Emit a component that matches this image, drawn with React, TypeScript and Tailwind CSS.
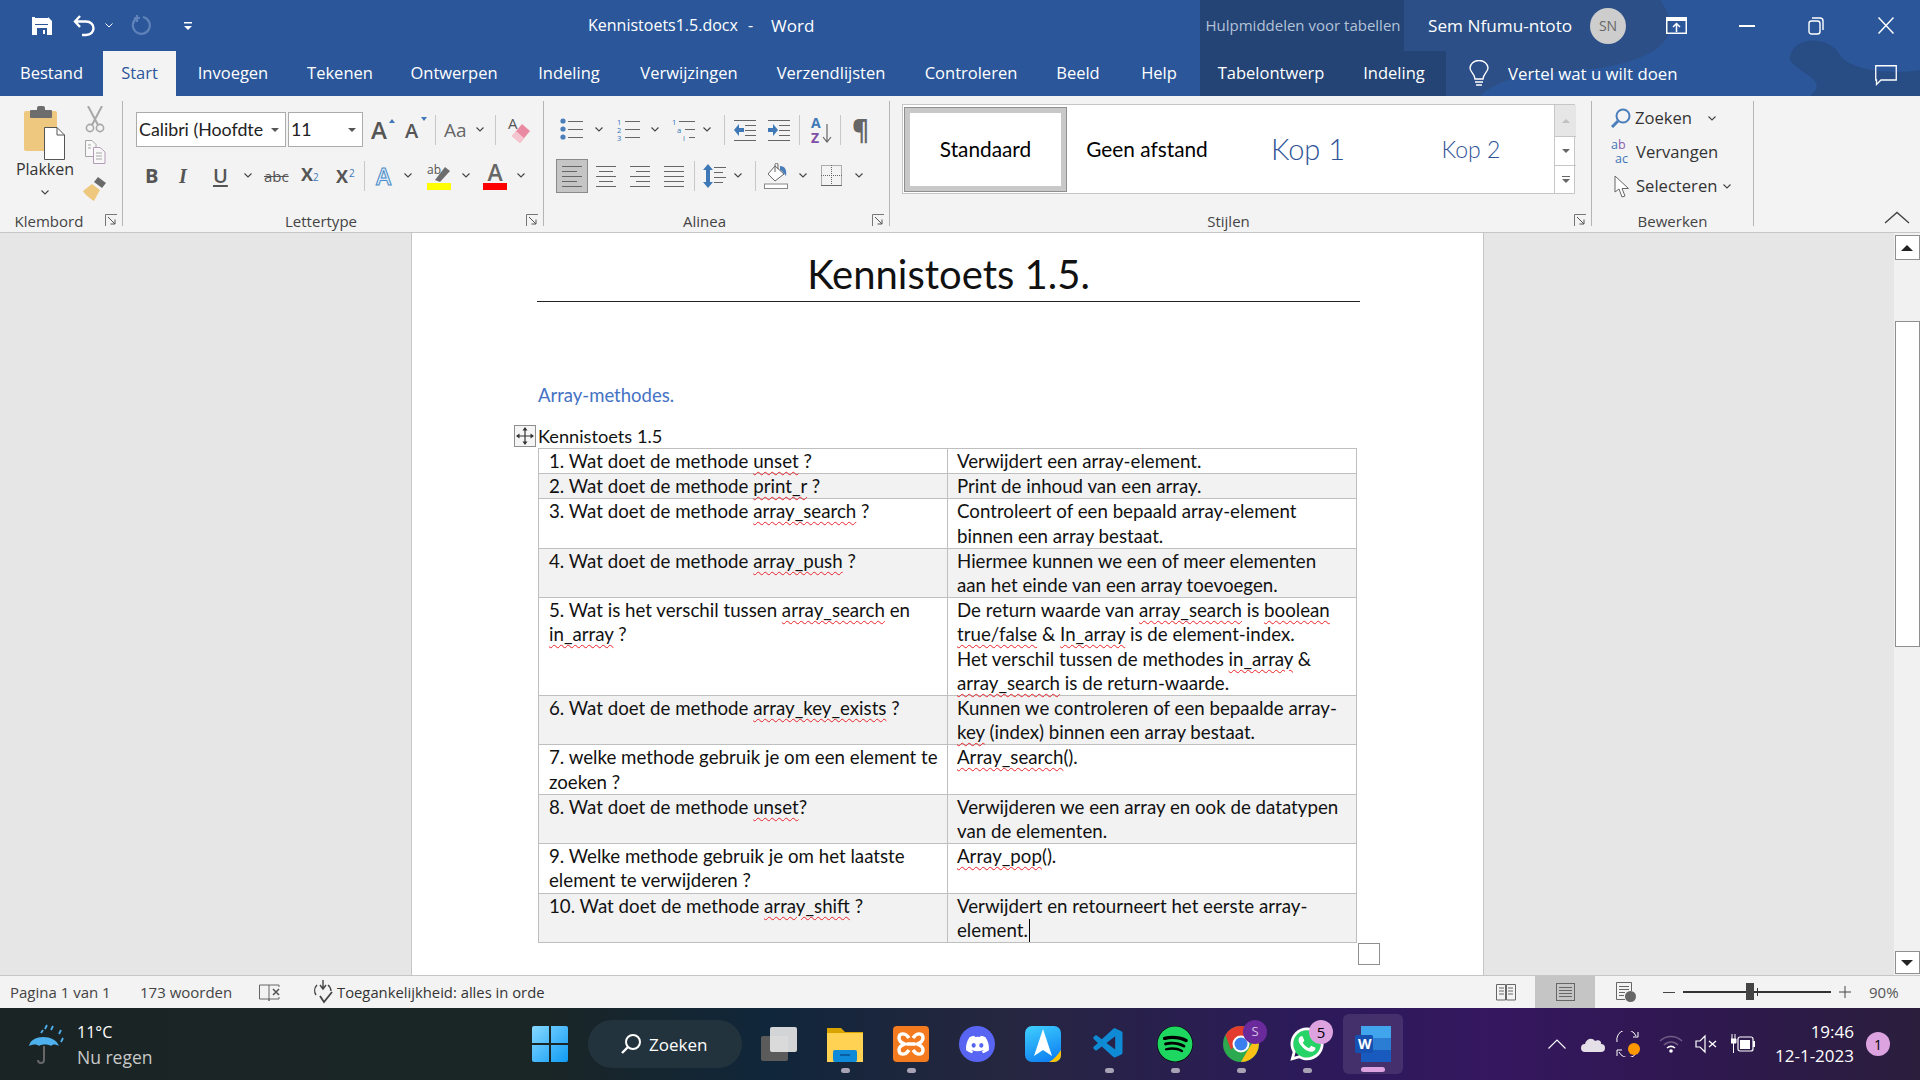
// App.tsx - Word window with the Kennistoets document
import React from "react";
import { FaDiscord, FaSpotify, FaWhatsapp } from "react-icons/fa";
import { VscVscode } from "react-icons/vsc";

const Chev = ({ className = "" }: { className?: string }) => (
  <svg width="8" height="5" viewBox="0 0 8 5" className={`shrink-0 ${className}`}>
    <path d="M0.5 0.5 L4 4 L7.5 0.5" fill="none" stroke="#444" strokeWidth="1.1" />
  </svg>
);

const Sep = ({ className = "" }: { className?: string }) => (
  <div className={`w-px h-[30px] bg-[#c8c8c8] shrink-0 ${className}`} />
);

const Launcher = () => (
  <svg width="13" height="13" viewBox="0 0 13 13" className="absolute right-[4px] bottom-[-1px]">
    <path d="M0.5 12 V0.5 H12" fill="none" stroke="#777" />
    <path d="M3 3 L10 10 M10 5.5 V10 H5.5" fill="none" stroke="#555" />
  </svg>
);

const Group = ({ className, label, launcher = true, children }: { className: string; label: string; launcher?: boolean; children: React.ReactNode }) => (
  <div className={`relative flex flex-col h-[125px] mt-[5px] shrink-0 border-r border-[#b5b5b5] ${className}`}>
    <div className="flex-1 min-h-0">{children}</div>
    <div className={`text-center text-[15px] leading-[20px] text-[#444] mb-[-5px] ${launcher ? "pr-[24px]" : ""}`}>{label}</div>
    {launcher && <Launcher />}
  </div>
);

// horizontal line block used by the alignment and list icons
const Lines = ({ w, ys, xs, x2s, color = "#666" }: { w: number; ys: number[]; xs?: number[]; x2s?: number[]; color?: string }) => (
  <svg width={w} height="24" viewBox={`0 0 ${w} 24`} className="shrink-0">
    {ys.map((y, i) => (
      <line key={i} x1={xs ? xs[i] : 0} x2={x2s ? x2s[i] : w} y1={y + 0.5} y2={y + 0.5} stroke={color} strokeWidth="1" />
    ))}
  </svg>
);

const Bullets = ({ kind }: { kind: "dot" | "num" | "multi" }) => (
  <svg width="23" height="24" viewBox="0 0 23 24" className="shrink-0 overflow-visible">
    {kind === "dot" && [3, 11, 19].map((y) => <circle key={y} cx="3" cy={y} r="2.6" fill="#4a7ebb" />)}
    {kind === "num" && ["1", "2", "3"].map((t, i) => <text key={t} x="0" y={7 + i * 8} fontSize="7.5" fill="#2f74b5" fontFamily="Open Sans">{t}</text>)}
    {kind === "multi" && (
      <>
        <text x="0" y="7" fontSize="7.5" fill="#2f74b5" fontFamily="Open Sans">1</text>
        <text x="5" y="15" fontSize="7.5" fill="#2f74b5" fontFamily="Open Sans">a</text>
        <text x="11" y="23" fontSize="7.5" fill="#2f74b5" fontFamily="Open Sans">i</text>
      </>
    )}
    {kind === "multi" ? (
      <>
        <line x1="7" x2="23" y1="3.5" y2="3.5" stroke="#666" />
        <line x1="13" x2="23" y1="11.5" y2="11.5" stroke="#666" />
        <line x1="17" x2="23" y1="19.5" y2="19.5" stroke="#666" />
      </>
    ) : (
      [3, 11, 19].map((y) => <line key={y} x1="8" x2="23" y1={y + 0.5} y2={y + 0.5} stroke="#666" />)
    )}
  </svg>
);

const Indent = ({ flip }: { flip?: boolean }) => (
  <svg width="22" height="22" viewBox="0 0 22 22" className="shrink-0">
    {[1, 21].map((y) => <line key={y} x1="0" x2="22" y1={y + 0.5} y2={y + 0.5} stroke="#666" />)}
    {[6, 11, 16].map((y) => <line key={y} x1="11" x2="22" y1={y + 0.5} y2={y + 0.5} stroke="#666" />)}
    {flip ? <path d="M0 9 H5 V5 L10 11 L5 17 V13 H0 Z" fill="#3f78b7" /> : <path d="M10 9 H5 V5 L0 11 L5 17 V13 H10 Z" fill="#3f78b7" />}
  </svg>
);

const ToolIcons = {
  Paste: () => (
    <svg width="42" height="54" viewBox="0 0 42 54">
      <rect x="0" y="5" width="33" height="40" rx="2" fill="#edc87e" />
      <rect x="6" y="4" width="22" height="8" rx="1" fill="#6d6d6d" />
      <rect x="13" y="0" width="8" height="6" rx="2" fill="#6d6d6d" />
      <path d="M20.5 21.5 H33 L40.5 29 V53.5 H20.5 Z" fill="#fff" stroke="#555" />
      <path d="M33 21.5 V29 H40.5" fill="none" stroke="#555" />
    </svg>
  ),
  Cut: () => (
    <svg width="20" height="27" viewBox="0 0 20 27">
      <path d="M3 0 L13 19 M17 0 L7 19" stroke="#a8a8a8" strokeWidth="2" fill="none" />
      <circle cx="5" cy="22" r="3.6" fill="none" stroke="#a8a8a8" strokeWidth="1.6" />
      <circle cx="15" cy="22" r="3.6" fill="none" stroke="#a8a8a8" strokeWidth="1.6" />
    </svg>
  ),
  Copy: () => (
    <svg width="21" height="24" viewBox="0 0 21 24">
      <path d="M0.5 0.5 H7 L11 4.5 V16.5 H0.5 Z" fill="#f8f8f8" stroke="#a5a5a5" />
      <path d="M8.5 7.5 H15 L20 12 V23.5 H8.5 Z" fill="#f8f8f8" stroke="#b39cb8" />
      <path d="M11 13 H17 M11 16 H17 M11 19 H17 M3 5 H6 M3 8 H6" stroke="#a5a5a5" />
    </svg>
  ),
  Painter: () => (
    <svg width="24" height="25" viewBox="0 0 24 25">
      <path d="M15 0 L23 6 L19 11 L11 5 Z" fill="#6a6a6a" />
      <path d="M9 7 L17 13 L11 24 C8 22 2 18 0 14 Z" fill="#edc87e" />
    </svg>
  ),
  Eraser: () => (
    <svg width="22" height="29" viewBox="0 0 22 29" className="overflow-visible">
      <text x="0" y="14" fontSize="15" fill="#555" fontFamily="Open Sans">A</text>
      <path d="M14 9 L22 16 L12 28 L4 21 Z" fill="#e98aa0" />
      <path d="M4 21 L8 16 L16 23 L12 28 Z" fill="#f5c6d0" />
    </svg>
  ),
  Sort: () => (
    <svg width="21" height="28" viewBox="0 0 21 28" className="overflow-visible">
      <text x="0" y="12" fontSize="14" fontWeight="700" fill="#3f78b7" fontFamily="Open Sans">A</text>
      <text x="0" y="27" fontSize="14" fontWeight="700" fill="#7e4fa5" fontFamily="Open Sans">Z</text>
      <path d="M16 8 V26 M12 21 L16 26 L20 21" fill="none" stroke="#666" strokeWidth="1.2" />
    </svg>
  ),
  Spacing: () => (
    <svg width="23" height="24" viewBox="0 0 23 24">
      <path d="M5 0 L10 6 H7 V18 H10 L5 24 L0 18 H3 V6 H0 Z" fill="#3f78b7" />
      {[3, 8, 13, 18].map((y, i) => <line key={y} x1="11" x2={i % 2 ? 20 : 23} y1={y + 0.5} y2={y + 0.5} stroke="#666" />)}
    </svg>
  ),
  Shading: () => (
    <svg width="24" height="26" viewBox="0 0 24 26">
      <path d="M11 3 L20 11 L11 18 L4 11 Z" fill="#fff" stroke="#666" />
      <path d="M11 9 V1.5 A1.5 1.5 0 0 1 14 2 V6" fill="none" stroke="#666" />
      <path d="M16 3 C21 3 23 7 22 13 C20 11 19 8 16 7 Z" fill="#4a7ebb" />
      <rect x="0.5" y="21" width="23" height="4.5" fill="#fff" stroke="#888" />
    </svg>
  ),
  Borders: () => (
    <svg width="21" height="21" viewBox="0 0 21 21">
      <rect x="0.5" y="0.5" width="20" height="20" fill="none" stroke="#666" strokeDasharray="1 1" />
      <path d="M10.5 0 V21 M0 10.5 H21" stroke="#666" strokeDasharray="1 1" />
      <line x1="0" x2="21" y1="20.5" y2="20.5" stroke="#666" />
    </svg>
  ),
  Search: () => (
    <svg width="20" height="20" viewBox="0 0 20 20">
      <circle cx="12" cy="8" r="6.5" fill="none" stroke="#4a7ebb" strokeWidth="2" />
      <path d="M7 13 L1 19" stroke="#4a7ebb" strokeWidth="3" />
    </svg>
  ),
  Cursor: () => (
    <svg width="16" height="23" viewBox="0 0 16 23">
      <path d="M1 1 V17 L5 14 L8 22 L11 21 L8 13.5 L14.5 13.5 Z" fill="#fff" stroke="#666" />
    </svg>
  ),
};

const Spell = ({ text }: { text: string }) => (
  <>
    {text.split(/(\{[^}]*\})/).map((part, i) =>
      part.startsWith("{") ? (
        <span key={i} className="underline decoration-wavy decoration-[#e8222a] decoration-1 underline-offset-[3px]">
          {part.slice(1, -1)}
        </span>
      ) : (
        <span key={i}>{part}</span>
      )
    )}
  </>
);

const rows: { q: string[]; a: string[] }[] = [
  { q: ["1. Wat doet de methode {unset} ?"], a: ["Verwijdert een array-element."] },
  { q: ["2. Wat doet de methode {print_r} ?"], a: ["Print de inhoud van een array."] },
  { q: ["3. Wat doet de methode {array_search} ?"], a: ["Controleert of een bepaald array-element", "binnen een array bestaat."] },
  { q: ["4. Wat doet de methode {array_push} ?"], a: ["Hiermee kunnen we een of meer elementen", "aan het einde van een array toevoegen."] },
  {
    q: ["5. Wat is het verschil tussen {array_search} en", "{in_array} ?"],
    a: ["De return waarde van {array_search} is {boolean}", "{true/false} & {In_array} is de element-index.", "Het verschil tussen de methodes {in_array} &", "{array_search} is de return-waarde."],
  },
  { q: ["6. Wat doet de methode {array_key_exists} ?"], a: ["Kunnen we controleren of een bepaalde array-", "{key} (index) binnen een array bestaat."] },
  { q: ["7. welke methode gebruik je om een element te", "zoeken ?"], a: ["{Array_search}()."] },
  { q: ["8. Wat doet de methode {unset}?"], a: ["Verwijderen we een array en ook de datatypen", "van de elementen."] },
  { q: ["9. Welke methode gebruik je om het laatste", "element te verwijderen ?"], a: ["{Array_pop}()."] },
  { q: ["10. Wat doet de methode {array_shift} ?"], a: ["Verwijdert en retourneert het eerste array-", "element."] },
];

const tabs = [
  { label: "Bestand", w: "w-[103px]" },
  { label: "Start", w: "w-[73px]", active: true },
  { label: "Invoegen", w: "w-[114px]" },
  { label: "Tekenen", w: "w-[100px]" },
  { label: "Ontwerpen", w: "w-[128px]" },
  { label: "Indeling", w: "w-[102px]" },
  { label: "Verwijzingen", w: "w-[138px]" },
  { label: "Verzendlijsten", w: "w-[146px]" },
  { label: "Controleren", w: "w-[134px]" },
  { label: "Beeld", w: "w-[80px]" },
  { label: "Help", w: "w-[82px]" },
];

const dockClass = "w-[66px] h-full flex flex-col items-center relative";

const Dot = () => <div className="absolute bottom-[7px] w-[9px] h-[5px] rounded-full bg-[#a8a3b4]" />;

const Header = () => (
  <div className="relative h-[96px] bg-[#2b579a] shrink-0 text-white overflow-hidden">
    {/* background art top right */}
    <svg className="absolute right-0 top-0" width="560" height="96" viewBox="0 0 560 96">
      <path d="M0 0 H300 C330 40 290 60 240 68 C190 74 150 70 120 96 H60 C40 60 20 30 0 0 Z" fill="#2c4f87" />
      <path d="M430 60 C430 35 470 35 480 55 C490 70 530 75 560 70 V96 H450 C470 80 440 75 430 60 Z" fill="#284d85" />
    </svg>
    {/* title row */}
    <div className="relative flex items-center h-[51px]">
      <div className="w-[588px] flex items-center shrink-0">
        <svg width="20" height="20" viewBox="0 0 20 20" className="ml-[32px]">
          <path d="M0 1 H16 L20 5 V19 H0 Z" fill="#fff" />
          <rect x="3" y="1" width="13" height="8" fill="#2b579a" />
          <rect x="3" y="2" width="13" height="6" fill="#fff" />
          <rect x="5" y="12" width="10" height="7" fill="#2b579a" />
          <rect x="11" y="14" width="2" height="4" fill="#fff" />
        </svg>
        <svg width="22" height="24" viewBox="0 0 22 24" className="ml-[21px]">
          <path d="M7 2 L2 7.5 L7 13 M2 7.5 H13 C23 7.5 23 21 13 21 H9" fill="none" stroke="#fff" strokeWidth="2.4" />
        </svg>
        <svg width="8" height="5" viewBox="0 0 8 5" className="ml-[10px]">
          <path d="M0.5 0.5 L4 4 L7.5 0.5" fill="none" stroke="#fff" />
        </svg>
        <svg width="20" height="22" viewBox="0 0 20 22" className="ml-[18px]">
          <path d="M12 2 A8.5 8.5 0 1 1 6 3 M6 0 V7 M3 3 H9" fill="none" stroke="#5f83b9" strokeWidth="2.2" />
        </svg>
        <svg width="10" height="10" viewBox="0 0 10 10" className="ml-[32px]">
          <rect x="1" y="1" width="8" height="1.5" fill="#fff" />
          <path d="M1 5 H9 L5 9 Z" fill="#fff" />
        </svg>
      </div>
      <div className="w-[612px] text-[16px] shrink-0 flex">
        <span>Kennistoets1.5.docx</span>
        <span className="ml-[10px]">-</span>
        <span className="ml-[18px] text-[17px]">Word</span>
      </div>
      <div className="w-[204px] h-full bg-[#234475] text-[#b4c2d8] text-[15px] flex items-center justify-center shrink-0 pl-[2px]">Hulpmiddelen voor tabellen</div>
      <div className="ml-[24px] w-[162px] text-[17.2px] shrink-0">Sem Nfumu-ntoto</div>
      <div className="w-[36px] h-[36px] rounded-full bg-[#cdcdcd] text-[#666] text-[14px] flex items-center justify-center shrink-0">SN</div>
      <svg width="21" height="17" viewBox="0 0 21 17" className="ml-[40px] shrink-0">
        <rect x="0.75" y="0.75" width="19.5" height="15.5" fill="none" stroke="#fff" strokeWidth="1.5" />
        <rect x="0" y="0" width="21" height="4" fill="#fff" />
        <path d="M10.5 15 V7 M7 10 L10.5 6.5 L14 10" fill="none" stroke="#fff" strokeWidth="1.5" />
      </svg>
      <div className="ml-[52px] w-[16px] h-[2px] bg-white shrink-0" />
      <svg width="16" height="18" viewBox="0 0 16 18" className="ml-[53px] shrink-0">
        <rect x="1" y="4" width="11" height="13" rx="2.5" fill="none" stroke="#fff" strokeWidth="1.4" />
        <path d="M4 1 H12 C14 1 15 2 15 4 V13" fill="none" stroke="#fff" strokeWidth="1.4" />
      </svg>
      <svg width="16" height="17" viewBox="0 0 16 17" className="ml-[54px] shrink-0">
        <path d="M0.5 0.5 L15.5 16.5 M15.5 0.5 L0.5 16.5" stroke="#fff" strokeWidth="1.5" />
      </svg>
    </div>
    {/* tab row */}
    <div className="relative flex items-stretch h-[45px] text-[16.5px]">
      {tabs.map((t, i) => (
        <div
          key={i}
          className={`${t.w} flex items-center justify-center shrink-0 ${t.active ? "bg-[#f3f3f3] text-[#2b579a]" : ""}`}
        >
          {t.label}
        </div>
      ))}
      <div className="w-[246px] bg-[#234475] flex shrink-0">
        <div className="w-[142px] flex items-center justify-center">Tabelontwerp</div>
        <div className="w-[104px] flex items-center justify-center">Indeling</div>
      </div>
      <svg width="20" height="27" viewBox="0 0 20 27" className="ml-[23px] self-center shrink-0">
        <path d="M6 19 C6 14 1 12 1 8 A9 7.5 0 0 1 19 8 C19 12 14 14 14 19 Z" fill="none" stroke="#fff" strokeWidth="1.4" />
        <path d="M6 22 H14 M7 25 H13" stroke="#fff" strokeWidth="1.6" />
      </svg>
      <div className="ml-[19px] self-center text-[16.8px]">Vertel wat u wilt doen</div>
      <svg width="22" height="21" viewBox="0 0 22 21" className="absolute left-[1875px] top-[14px]">
        <path d="M0.75 0.75 H21.25 V15 H6 L1.5 19.5 V15 H0.75 Z" fill="none" stroke="#fff" strokeWidth="1.3" />
      </svg>
    </div>
  </div>
);

const Ribbon = () => (
  <div className="relative flex h-[137px] bg-[#f3f3f3] border-b border-[#c6c6c6] shrink-0 text-[#333]">
    {/* Klembord */}
    <Group className="w-[123px]" label="Klembord">
      <div className="flex">
        <div className="w-[90px] flex flex-col items-center pt-[5px]">
          <ToolIcons.Paste />
          <div className="text-[16px] leading-[20px] mt-[-1px]">Plakken</div>
          <Chev className="mt-[11px]" />
        </div>
        <div className="ml-[-7px] w-[24px] flex flex-col items-center pt-[5px]">
          <ToolIcons.Cut />
          <div className="mt-[7px]"><ToolIcons.Copy /></div>
          <div className="mt-[13px]"><ToolIcons.Painter /></div>
        </div>
      </div>
    </Group>

    {/* Lettertype */}
    <Group className="w-[421px]" label="Lettertype">
      <div className="flex items-center h-[35px] mt-[11px]">
        <div className="ml-[13px] w-[150px] h-[35px] bg-white border border-[#ababab] flex items-center pl-[2px] shrink-0 relative [font-family:Lato,sans-serif] text-[17.8px] text-[#222] whitespace-nowrap">
          Calibri (Hoofdte
          <span className="absolute right-[6px] top-[15px] w-0 h-0 border-x-[4px] border-x-transparent border-t-[4px] border-t-[#555]" />
        </div>
        <div className="ml-[2px] w-[75px] h-[35px] bg-white border border-[#ababab] flex items-center pl-[2px] shrink-0 relative [font-family:Lato,sans-serif] text-[17.8px] text-[#222]">
          11
          <span className="absolute right-[6px] top-[15px] w-0 h-0 border-x-[4px] border-x-transparent border-t-[4px] border-t-[#555]" />
        </div>
        <div className="ml-[8px] w-[22px] text-[#555] text-[24px] font-semibold leading-[28px] relative">A<span className="absolute right-[-2px] top-[3px] w-0 h-0 border-x-[3.5px] border-x-transparent border-b-[4px] border-b-[#3f78b7]" /></div>
        <div className="ml-[12px] w-[21px] text-[#555] text-[20px] font-semibold leading-[26px] relative pt-[2px]">A<span className="absolute right-[-1px] top-[1px] w-0 h-0 border-x-[3.5px] border-x-transparent border-t-[4px] border-t-[#3f78b7]" /></div>
        <Sep className="ml-[9px]" />
        <div className="ml-[8px] w-[28px] text-[#666] text-[19px] leading-[26px] whitespace-nowrap">Aa</div>
        <Chev className="ml-[4px]" />
        <Sep className="ml-[11px]" />
        <div className="ml-[12px]"><ToolIcons.Eraser /></div>
      </div>
      <div className="flex items-center h-[35px] mt-[11px] text-[#555]">
        <div className="ml-[22px] w-[14px] text-[20px] font-bold leading-[26px]">B</div>
        <div className="ml-[20px] w-[12px] text-[20px] italic font-semibold leading-[26px] [font-family:'Liberation_Serif',serif]">I</div>
        <div className="ml-[22px] w-[14px] text-[20px] font-semibold leading-[26px] underline underline-offset-[2px]">U</div>
        <Chev className="ml-[17px]" />
        <div className="ml-[12px] w-[24px] text-[15px] leading-[20px] line-through">abc</div>
        <div className="ml-[13px] w-[20px] text-[18px] font-bold leading-[26px] whitespace-nowrap">X<span className="text-[10px] font-normal text-[#3f78b7]">2</span></div>
        <div className="ml-[15px] w-[20px] text-[18px] font-bold leading-[26px] relative">X<span className="absolute left-[13px] top-[-3px] text-[10px] font-normal text-[#3f78b7]">2</span></div>
        <Sep className="ml-[8px]" />
        <div className="ml-[11px] w-[18px] text-[23px] font-semibold leading-[28px] text-[#dcebf8] [-webkit-text-stroke:1px_#4a8bc8]">A</div>
        <Chev className="ml-[10px]" />
        <div className="ml-[15px] w-[24px] flex flex-col items-center">
          <svg width="24" height="21" viewBox="0 0 24 21" className="overflow-visible">
            <text x="0" y="12" fontSize="12" fill="#555" fontFamily="Open Sans">ab</text>
            <path d="M8 18 L18 5 L23 9 L13 20 Z" fill="#6d6d6d" />
          </svg>
          <div className="w-[24px] h-[7px] bg-[#ffff00]" />
        </div>
        <Chev className="ml-[11px]" />
        <div className="ml-[13px] w-[24px] flex flex-col items-center">
          <div className="text-[23px] leading-[21px] font-semibold text-[#666]">A</div>
          <div className="w-[24px] h-[7px] bg-[#ff0000]" />
        </div>
        <Chev className="ml-[10px]" />
      </div>
    </Group>

    {/* Alinea */}
    <Group className="w-[346px]" label="Alinea">
      <div className="flex items-center h-[35px] mt-[11px]">
        <div className="ml-[16px]"><Bullets kind="dot" /></div>
        <Chev className="ml-[12px]" />
        <div className="ml-[14px]"><Bullets kind="num" /></div>
        <Chev className="ml-[11px]" />
        <div className="ml-[13px]"><Bullets kind="multi" /></div>
        <Chev className="ml-[8px]" />
        <Sep className="ml-[13px]" />
        <div className="ml-[9px]"><Indent /></div>
        <div className="ml-[12px]"><Indent flip /></div>
        <Sep className="ml-[9px]" />
        <div className="ml-[11px]"><ToolIcons.Sort /></div>
        <Sep className="ml-[8px]" />
        <div className="ml-[11px] w-[16px] text-[26px] leading-[30px] font-bold text-[#666]">¶</div>
      </div>
      <div className="flex items-center h-[35px] mt-[11px]">
        <div className="ml-[12px] w-[32px] h-[34px] bg-[#c5c5c5] border border-[#8a8a8a] flex items-center justify-center shrink-0">
          <Lines w={20} ys={[2, 7, 12, 17, 22]} x2s={[20, 15, 20, 15, 20]} />
        </div>
        <div className="ml-[8px]"><Lines w={20} ys={[2, 7, 12, 17, 22]} xs={[0, 3, 0, 3, 0]} x2s={[20, 17, 20, 17, 20]} /></div>
        <div className="ml-[14px]"><Lines w={20} ys={[2, 7, 12, 17, 22]} xs={[0, 6, 0, 6, 0]} /></div>
        <div className="ml-[14px]"><Lines w={20} ys={[2, 7, 12, 17, 22]} /></div>
        <Sep className="ml-[10px]" />
        <div className="ml-[8px]"><ToolIcons.Spacing /></div>
        <Chev className="ml-[8px]" />
        <Sep className="ml-[13px]" />
        <div className="ml-[8px]"><ToolIcons.Shading /></div>
        <Chev className="ml-[11px]" />
        <div className="ml-[14px]"><ToolIcons.Borders /></div>
        <Chev className="ml-[13px]" />
      </div>
    </Group>

    {/* Stijlen */}
    <Group className="w-[702px]" label="Stijlen">
      <div className="ml-[12px] mt-[3px] w-[673px] h-[90px] bg-white border border-[#c6c6c6] flex items-center [font-family:Lato,sans-serif]">
        <div className="ml-[1px] w-[163px] h-[85px] border border-[#8f8f8f] bg-white shrink-0 outline-[5px] outline-[#c8c8c8] -outline-offset-[6px] flex items-center justify-center text-[20.8px] text-black">Standaard</div>
        <div className="w-[160px] text-center text-[20.8px] text-black shrink-0">Geen afstand</div>
        <div className="w-[162px] text-center text-[29px] font-light text-[#2f5496] shrink-0">Kop 1</div>
        <div className="w-[164px] text-center text-[23px] font-light text-[#2f5496] shrink-0">Kop 2</div>
        <div className="ml-[1px] w-[22px] h-full flex flex-col shrink-0 border-l border-[#c6c6c6]">
          <div className="h-[32px] bg-[#e6e6e6] flex items-center justify-center border-b border-[#c6c6c6]">
            <span className="w-0 h-0 border-x-[4px] border-x-transparent border-b-[4px] border-b-[#c0c0c0]" />
          </div>
          <div className="h-[29px] flex items-center justify-center border-b border-[#c6c6c6]">
            <span className="w-0 h-0 border-x-[4px] border-x-transparent border-t-[4px] border-t-[#666]" />
          </div>
          <div className="flex-1 flex flex-col gap-[2px] items-center justify-center">
            <span className="w-[8px] h-px bg-[#666]" />
            <span className="w-0 h-0 border-x-[4px] border-x-transparent border-t-[4px] border-t-[#666]" />
          </div>
        </div>
      </div>
    </Group>

    {/* Bewerken */}
    <Group className="w-[162px]" label="Bewerken" launcher={false}>
      <div className="flex flex-col text-[16.6px]">
        <div className="h-[34px] flex items-center">
          <div className="ml-[19px] w-[24px]"><ToolIcons.Search /></div>
          <span>Zoeken</span>
          <Chev className="ml-[16px]" />
        </div>
        <div className="h-[34px] flex items-center">
          <div className="ml-[18px] w-[26px] leading-[14px] text-[12.5px] font-medium text-[#3f78b7] relative">
            <div className="pl-[1px]">a<span className="text-[#8a5cab]">b</span></div>
            <div className="pl-[5px]">ac</div>
          </div>
          <span>Vervangen</span>
        </div>
        <div className="h-[34px] flex items-center">
          <div className="ml-[22px] w-[22px]"><ToolIcons.Cursor /></div>
          <span>Selecteren</span>
          <Chev className="ml-[6px]" />
        </div>
      </div>
    </Group>

    <svg width="26" height="14" viewBox="0 0 26 14" className="absolute left-[1884px] top-[115px]">
      <path d="M1 12 L13 1.5 L25 12" fill="none" stroke="#444" strokeWidth="1.4" />
    </svg>
  </div>
);

const Page = () => (
  <div className="relative w-[1073px] ml-[411px] h-full bg-white border-x border-[#c6c6c6] shrink-0 overflow-hidden [font-family:Lato,sans-serif] text-[#111]">
    <div className="ml-[125px] w-[823px] border-b border-[#222] h-[69px] pt-[14px] flex items-center justify-center text-[40px] leading-[50px]">Kennistoets 1.5.</div>
    <div className="ml-[126px] mt-[81px] text-[#4472c4] text-[18.5px] leading-[24px]">Array-methodes.</div>
    <div className="ml-[126px] mt-[17px] text-[18.2px] leading-[24px]">Kennistoets 1.5</div>

    {/* table move handle */}
    <div className="absolute left-[102px] top-[192px] w-[22px] h-[22px] border border-[#8f8f8f] bg-[#f5f5f5] flex items-center justify-center">
      <svg width="18" height="18" viewBox="0 0 18 18">
        <path d="M9 1 V17 M1 9 H17" stroke="#333" strokeWidth="1.2" />
        <path d="M9 0 L11.5 3.5 H6.5 Z M9 18 L11.5 14.5 H6.5 Z M0 9 L3.5 6.5 V11.5 Z M18 9 L14.5 6.5 V11.5 Z" fill="#333" />
      </svg>
    </div>

    <table className="ml-[126px] w-[819px] table-fixed border-collapse text-[18.7px] leading-[24.2px]">
      <tbody>
        {rows.map((r, i) => (
          <tr key={i} className={i % 2 === 1 ? "bg-[#f2f2f2]" : "bg-white"}>
            <td className="w-[409px] border border-[#bfbfbf] pl-[10px] align-top whitespace-nowrap">
              {r.q.map((l, j) => (
                <div key={j}><Spell text={l} /></div>
              ))}
            </td>
            <td className="border border-[#bfbfbf] pl-[9px] align-top whitespace-nowrap">
              {r.a.map((l, j) => (
                <div key={j} className="relative w-fit">
                  <Spell text={l} />
                  {i === 9 && j === 1 && <span className="absolute right-[-2px] top-[1px] w-px h-[23px] bg-black" />}
                </div>
              ))}
            </td>
          </tr>
        ))}
      </tbody>
    </table>

    {/* table resize handle */}
    <div className="absolute left-[946px] top-[710px] w-[22px] h-[22px] border border-[#8f8f8f] bg-white" />
  </div>
);

const Scrollbar = () => (
  <div className="absolute right-0 top-0 bottom-0 w-[26px] bg-[#f1f1f1] flex flex-col items-center pt-[2px] pb-[1px]">
    <div className="w-[25px] h-[25px] bg-white border border-[#8f8f8f] flex items-center justify-center shrink-0">
      <span className="w-0 h-0 border-x-[6px] border-x-transparent border-b-[6px] border-b-[#222]" />
    </div>
    <div className="w-[25px] h-[326px] mt-[61px] bg-white border border-[#8f8f8f] shrink-0" />
    <div className="flex-1" />
    <div className="w-[25px] h-[23px] bg-white border border-[#8f8f8f] flex items-center justify-center shrink-0">
      <span className="w-0 h-0 border-x-[6px] border-x-transparent border-t-[6px] border-t-[#222]" />
    </div>
  </div>
);

const StatusBar = () => (
  <div className="flex items-center h-[33px] bg-[#f3f3f3] border-t border-[#c6c6c6] text-[15px] text-[#444] shrink-0">
    <span className="ml-[10px] w-[130px]">Pagina 1 van 1</span>
    <span className="w-[119px]">173 woorden</span>
    <svg width="21" height="19" viewBox="0 0 21 19" className="shrink-0">
      <path d="M10 2 H0.5 V16 H10 V18 M10 2 V18 M10 2 H20 V4 M20 14 V16 H10" fill="none" stroke="#666" />
      <path d="M14 6 L20 12 M20 6 L14 12" stroke="#555" strokeWidth="1.6" />
    </svg>
    <svg width="20" height="24" viewBox="0 0 20 24" className="ml-[33px] shrink-0">
      <path d="M4 5 A8 8 0 0 0 3 15 M15 5 A8 8 0 0 1 18 11" fill="none" stroke="#444" strokeWidth="1.4" />
      <path d="M10 0 V8 M7 5 L10 9 L13 5" fill="none" stroke="#444" strokeWidth="1.4" />
      <path d="M7 16 L11 22 L19 12" fill="none" stroke="#444" strokeWidth="1.8" />
    </svg>
    <span className="ml-[4px] w-[240px] text-[14.8px] text-[#333]">Toegankelijkheid: alles in orde</span>

    <div className="ml-auto flex items-center h-full">
      <svg width="20" height="18" viewBox="0 0 20 18" className="shrink-0">
        <path d="M0.5 1.5 H9.5 V17 H0.5 Z M10.5 1.5 H19.5 V17 H10.5 Z" fill="none" stroke="#666" />
        <path d="M3 5 H8 M3 8 H8 M3 11 H8 M12 5 H17 M12 8 H17 M12 11 H17" stroke="#666" />
      </svg>
      <div className="ml-[19px] w-[60px] h-full bg-[#c5c5c5] flex items-center justify-center shrink-0">
        <svg width="19" height="18" viewBox="0 0 19 18">
          <rect x="0.5" y="0.5" width="18" height="17" fill="none" stroke="#666" />
          <path d="M3 4.5 H16 M3 7.5 H16 M3 10.5 H16 M3 13.5 H16" stroke="#666" />
        </svg>
      </div>
      <svg width="20" height="20" viewBox="0 0 20 20" className="ml-[21px] shrink-0">
        <path d="M0.5 0.5 H15.5 V9 M0.5 0.5 V17.5 H9" fill="none" stroke="#666" />
        <path d="M3 4.5 H13 M3 7.5 H13 M3 10.5 H9 M3 13.5 H8" stroke="#666" />
        <circle cx="14.5" cy="14.5" r="5.5" fill="#666" />
      </svg>
      <div className="ml-[27px] w-[12px] h-px bg-[#444]" />
      <div className="ml-[8px] w-[148px] h-[2px] bg-[#333] relative">
        <div className="absolute left-[63px] top-[-8px] w-[8px] h-[17px] bg-[#444]" />
        <div className="absolute left-[74px] top-[-3px] w-px h-[8px] bg-[#333]" />
      </div>
      <svg width="12" height="12" viewBox="0 0 12 12" className="ml-[8px]">
        <path d="M6 0 V12 M0 6 H12" stroke="#444" />
      </svg>
      <span className="ml-[18px] mr-[18px] w-[33px] text-[#555]">90%</span>
    </div>
  </div>
);

const Taskbar = () => (
  <div className="flex items-center h-[72px] shrink-0 text-white bg-[linear-gradient(90deg,#1a2424_0%,#1a2525_28%,#10263a_40%,#25263f_52%,#2c1a5a_68%,#35175f_78%,#2f1850_88%,#2a1e3c_100%)]">
    {/* weather */}
    <svg width="36" height="40" viewBox="0 0 36 40" className="ml-[29px] shrink-0">
      <path d="M0 22 C2 10 26 10 30 22 C26 20 24 20 22 22 C20 20 12 20 10 22 C8 20 4 20 0 22 Z" fill="#4fb0ee" />
      <path d="M15 22 V36 A3 3 0 0 1 9 36" fill="none" stroke="#666" strokeWidth="2" />
      <path d="M18 1 L16 5 M24 2 L22 6 M32 6 L30 10 M34 14 L32 18 M14 6 L12 9" stroke="#4fb0ee" strokeWidth="1.8" />
    </svg>
    <div className="ml-[12px] w-[455px] shrink-0 pt-[2px]">
      <div className="text-[16px] leading-[25px]">11°C</div>
      <div className="text-[17.5px] leading-[25px] text-[#c9c9c9]">Nu regen</div>
    </div>
    {/* start */}
    <svg width="36" height="36" viewBox="0 0 36 36" className="shrink-0">
      <defs>
        <linearGradient id="win" x1="0" y1="0" x2="1" y2="1">
          <stop offset="0" stopColor="#86d8ff" />
          <stop offset="1" stopColor="#0f9bf5" />
        </linearGradient>
      </defs>
      <path d="M2 0 H17 V17 H0 V2 A2 2 0 0 1 2 0 Z M19 0 H34 A2 2 0 0 1 36 2 V17 H19 Z M0 19 H17 V36 H2 A2 2 0 0 1 0 34 Z M19 19 H36 V34 A2 2 0 0 1 34 36 H19 Z" fill="url(#win)" />
    </svg>
    <div className="ml-[20px] w-[154px] h-[48px] rounded-full bg-[#22333d] flex items-center pl-[32px] gap-[7px] shrink-0">
      <svg width="22" height="22" viewBox="0 0 22 22">
        <circle cx="13" cy="9" r="7" fill="none" stroke="#fff" strokeWidth="2" />
        <path d="M8 14 L2 20" stroke="#fff" strokeWidth="2.4" />
      </svg>
      <span className="text-[17px] pt-[2px]">Zoeken</span>
    </div>
    {/* dock */}
    <div className="ml-[4px] flex h-full shrink-0 items-center">
      <div className={dockClass + " justify-center"}>
        <div className="relative w-[36px] h-[34px]">
          <div className="absolute left-0 bottom-0 w-[27px] h-[25px] bg-[#5b5b5b] rounded-[2px]" />
          <div className="absolute right-0 top-0 w-[27px] h-[25px] bg-[#e8e8e8]/90 rounded-[2px]" />
        </div>
      </div>
      <div className={dockClass + " justify-center"}>
        <svg width="36" height="36" viewBox="0 0 36 36">
          <path d="M0 2 H14 L18 6 H36 V36 H0 Z" fill="#d9a300" />
          <path d="M0 7 H36 V36 H0 Z" fill="#ffd253" />
          <rect x="6" y="24" width="24" height="12" rx="2" fill="#0f8ad8" />
          <rect x="13" y="28" width="10" height="2" fill="#0a5fa3" />
        </svg>
        <Dot />
      </div>
      <div className={dockClass + " justify-center"}>
        <div className="w-[36px] h-[36px] rounded-[4px] bg-[#f47a20] flex items-center justify-center">
          <svg width="28" height="26" viewBox="0 0 28 26">
            <path d="M12 7 C8 1 2 2 2 7 C2 10 5 12 8 13 C5 14 2 16 2 19 C2 24 8 25 12 19 M16 7 C20 1 26 2 26 7 C26 10 23 12 20 13 C23 14 26 16 26 19 C26 24 20 25 16 19 M10 13 H18" fill="none" stroke="#fff" strokeWidth="3.4" />
          </svg>
        </div>
        <Dot />
      </div>
      <div className={dockClass + " justify-center"}>
        <div className="w-[36px] h-[36px] rounded-full bg-[#5865f2] flex items-center justify-center">
          <FaDiscord size={25} color="#fff" />
        </div>
      </div>
      <div className={dockClass + " justify-center"}>
        <div className="w-[36px] h-[36px] rounded-[7px] bg-[linear-gradient(160deg,#3fd0ff,#0a78f0)] overflow-hidden flex items-center justify-center">
          <svg width="36" height="36" viewBox="0 0 36 36">
            <path d="M18 3 L27 30 L18 24 L9 30 Z" fill="#fff" />
            <path d="M36 24 V36 H24 C28 34 32 30 36 24 Z" fill="#ffc400" />
          </svg>
        </div>
      </div>
      <div className={dockClass + " justify-center"}>
        <VscVscode size={36} color="#0f8bd6" />
        <Dot />
      </div>
      <div className={dockClass + " justify-center"}>
        <div className="w-[36px] h-[36px] rounded-full bg-black flex items-center justify-center">
          <FaSpotify size={36} color="#1ed760" />
        </div>
        <Dot />
      </div>
      <div className={dockClass + " justify-center"}>
        <svg width="36" height="36" viewBox="0 0 36 36">
          <circle cx="18" cy="18" r="18" fill="#2da94f" />
          <path d="M18 0 A18 18 0 0 1 34 10 L18 10 L8 24 L2.5 9 A18 18 0 0 1 18 0 Z" fill="#e33b2e" />
          <path d="M34 10 A18 18 0 0 1 18 36 L26 22 Z" fill="#fbc116" />
          <circle cx="18" cy="18" r="8.5" fill="#fff" />
          <circle cx="18" cy="18" r="6.5" fill="#3a7ff0" />
        </svg>
        <div className="absolute left-[35px] top-[12px] w-[24px] h-[24px] rounded-full bg-[#6a2a9c] text-[13px] text-[#d5c0e0] flex items-center justify-center">S</div>
        <Dot />
      </div>
      <div className={dockClass + " justify-center"}>
        <div className="relative w-[38px] h-[38px] flex items-center justify-center">
          <div className="absolute w-[28px] h-[28px] rounded-full bg-[#25d366]" />
          <FaWhatsapp size={38} color="#fff" className="relative" />
        </div>
        <div className="absolute left-[35px] top-[12px] w-[24px] h-[24px] rounded-full bg-[#dca3e0] text-[15px] text-black flex items-center justify-center">5</div>
        <Dot />
      </div>
      <div className="ml-[3px] w-[60px] h-[60px] rounded-[6px] bg-white/10 flex flex-col items-center justify-center relative shrink-0">
        <svg width="36" height="36" viewBox="0 0 36 36">
          <rect x="6" y="0" width="30" height="12" fill="#41a5ee" />
          <rect x="6" y="12" width="30" height="12" fill="#2b7cd3" />
          <rect x="6" y="24" width="30" height="12" fill="#185abd" />
          <rect x="0" y="9" width="18" height="18" rx="1.5" fill="#1650b0" />
          <text x="3" y="23" fontSize="14" fontWeight="700" fill="#fff" fontFamily="Open Sans">W</text>
        </svg>
        <div className="absolute bottom-[2px] w-[24px] h-[5px] rounded-full bg-[#dca3e0]" />
      </div>
    </div>
    {/* tray */}
    <div className="flex-1" />
    <svg width="18" height="10" viewBox="0 0 18 10" className="shrink-0">
      <path d="M0.5 9.5 L9 1 L17.5 9.5" fill="none" stroke="#fff" strokeWidth="1.1" />
    </svg>
    <svg width="24" height="16" viewBox="0 0 24 16" className="ml-[15px] shrink-0">
      <path d="M4 16 A4 4 0 0 1 4 8 C5 3 11 1 14 5 C18 3 21 6 20 8 A4 4 0 0 1 20 16 Z" fill="#e5e0e8" />
    </svg>
    <svg width="26" height="26" viewBox="0 0 26 26" className="ml-[11px] shrink-0">
      <path d="M1 11 A10 10 0 0 1 20 5 M22 1 V6 H17 M22 17 A10 10 0 0 1 3 21 M1 25 V19 H6" fill="none" stroke="#fff" strokeWidth="1" />
      <circle cx="18" cy="18" r="6" fill="#ff9800" />
    </svg>
    <svg width="24" height="18" viewBox="0 0 24 18" className="ml-[17px] shrink-0">
      <path d="M1 6 C7 0 17 0 23 6 M5 10 C9 6 15 6 19 10" fill="none" stroke="#6f5c86" strokeWidth="1.5" />
      <path d="M8 13 C10.5 11 13.5 11 16 13" fill="none" stroke="#fff" strokeWidth="1.6" />
      <circle cx="12" cy="16" r="1.8" fill="#fff" />
    </svg>
    <svg width="23" height="20" viewBox="0 0 23 20" className="ml-[12px] shrink-0">
      <path d="M1 7 H5 L10 2 V18 L5 13 H1 Z" fill="none" stroke="#fff" strokeWidth="1.2" />
      <path d="M14 7 L21 13 M21 7 L14 13" stroke="#fff" strokeWidth="1.3" />
    </svg>
    <svg width="24" height="20" viewBox="0 0 24 20" className="ml-[13px] shrink-0">
      <rect x="7" y="3" width="15" height="14" rx="2" fill="none" stroke="#fff" strokeWidth="1.2" />
      <rect x="22" y="7" width="2" height="6" fill="#fff" />
      <rect x="9" y="6" width="10" height="9" fill="#fff" />
      <path d="M1 0 V5 M4 0 V5 M0 5 H5 V9 H0 Z M2.5 9 V19" stroke="#fff" fill="#fff" strokeWidth="1" />
    </svg>
    <div className="ml-[20px] w-[79px] text-right text-[17px] leading-[24px] shrink-0 whitespace-nowrap">
      <div>19:46</div>
      <div className="ml-[-20px]">12-1-2023</div>
    </div>
    <div className="ml-[12px] mr-[30px] w-[24px] h-[24px] rounded-full bg-[#dca3e0] text-black text-[14px] flex items-center justify-center shrink-0">1</div>
  </div>
);

export default function App() {
  return (
    <div className="w-[1920px] h-[1080px] flex flex-col overflow-hidden bg-[#e6e6e6] [font-family:'Open_Sans',sans-serif]">
      <Header />
      <Ribbon />
      <div className="relative flex-1 min-h-0">
        <Page />
        <Scrollbar />
      </div>
      <StatusBar />
      <Taskbar />
    </div>
  );
}
